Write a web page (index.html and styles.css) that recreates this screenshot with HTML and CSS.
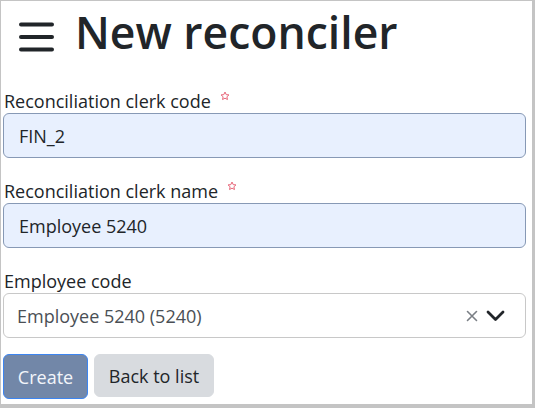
FILE: index.html
```html
<!DOCTYPE html>
<html lang="en">
<head>
<meta charset="utf-8">
<title>New reconciler</title>
<link rel="stylesheet" href="styles.css">
</head>
<body>
<div class="frame">
  <header class="header">
    <svg class="burger" width="35" height="30" viewBox="0 0 35 30" aria-hidden="true">
      <g stroke="#212529" stroke-width="4" stroke-linecap="round">
        <line x1="2" y1="2.5" x2="33" y2="2.5"/>
        <line x1="2" y1="15" x2="33" y2="15"/>
        <line x1="2" y1="27.5" x2="33" y2="27.5"/>
      </g>
    </svg>
    <h1 class="title">New reconciler</h1>
  </header>
  <form class="form">
    <div class="group">
      <label class="label">Reconciliation clerk code<svg class="star" width="10" height="10" viewBox="0 0 24 24"><path d="M12 2.5l2.9 6.2 6.6.7-5 4.5 1.4 6.6L12 17.2l-5.9 3.3 1.4-6.6-5-4.5 6.6-.7z" fill="none" stroke="#e8677a" stroke-width="2.4" stroke-linejoin="round"/></svg></label>
      <div class="input filled">FIN_2</div>
    </div>
    <div class="group">
      <label class="label">Reconciliation clerk name<svg class="star" width="10" height="10" viewBox="0 0 24 24"><path d="M12 2.5l2.9 6.2 6.6.7-5 4.5 1.4 6.6L12 17.2l-5.9 3.3 1.4-6.6-5-4.5 6.6-.7z" fill="none" stroke="#e8677a" stroke-width="2.4" stroke-linejoin="round"/></svg></label>
      <div class="input filled">Employee 5240</div>
    </div>
    <div class="group">
      <label class="label">Employee code</label>
      <div class="select">
        <span class="select-value">Employee 5240 (5240)</span>
        <svg class="clear" width="12" height="12" viewBox="0 0 12 12"><path d="M1.5 1.5l9 9M10.5 1.5l-9 9" stroke="#7a7f85" stroke-width="1.6" stroke-linecap="round"/></svg>
        <svg class="chev" width="19" height="12" viewBox="0 0 19 12"><path d="M2 2l7.5 7.5L17 2" fill="none" stroke="#212529" stroke-width="2.8" stroke-linecap="round" stroke-linejoin="round"/></svg>
      </div>
    </div>
    <div class="actions">
      <button type="button" class="btn btn-primary">Create</button>
      <button type="button" class="btn btn-secondary">Back to list</button>
    </div>
  </form>
</div>
</body>
</html>
```
FILE: styles.css
```css
html, body {
  margin: 0;
  padding: 0;
}
body {
  font-family: "Open Sans", "Noto Sans", sans-serif;
  color: #212529;
  background: #fff;
}
.frame {
  box-sizing: border-box;
  width: 535px;
  height: 408px;
  border-style: solid;
  border-color: #c4c4c4;
  border-width: 1px 3px 4px 1px;
  padding: 0 6px 0 2px;
  overflow: hidden;
}
.header {
  display: flex;
  align-items: center;
  height: 88px;
  padding-left: 16px;
  gap: 21px;
}
.burger {
  display: block;
  margin-top: -17px;
}
.title {
  margin: 0;
  font-size: 44.5px;
  font-weight: 600;
  line-height: 1;
  margin-top: -26px;
  letter-spacing: 0;
}
.form {
  display: flex;
  flex-direction: column;
}
.group {
  display: flex;
  flex-direction: column;
  margin-bottom: 21px;
}
.label {
  display: flex;
  align-items: flex-start;
  font-size: 18px;
  line-height: 24px;
  height: 24px;
  margin-left: 1px;
}
.star {
  margin-left: 9px;
  margin-top: 2px;
}
.input {
  box-sizing: border-box;
  height: 45px;
  display: flex;
  align-items: center;
  padding: 0 15px;
  border-radius: 6px;
  font-size: 18px;
}
.filled {
  background: #e8f0fe;
  border: 1px solid #8799b5;
}
.select {
  box-sizing: border-box;
  height: 45px;
  display: flex;
  align-items: center;
  padding: 0 20px 0 13px;
  border: 1px solid #c8c8c8;
  border-radius: 6px;
  font-size: 18px;
  color: #4a4f55;
}
.select-value {
  flex: 1;
}
.clear {
  margin-right: 8px;
}
.actions {
  display: flex;
  gap: 6px;
  margin-top: -5px;
}
.btn {
  box-sizing: border-box;
  height: 45px;
  font-family: inherit;
  font-size: 18px;
  border-radius: 6px;
  padding: 0;
  cursor: pointer;
}
.btn-primary {
  width: 85px;
  background: #7287a8;
  color: #f2f5fa;
  border: 1.5px solid #3d85f0;
}
.btn-secondary {
  width: 120px;
  height: 43px;
  background: #d8dbdf;
  color: #212529;
  border: 1px solid #d8dbdf;
}
```
